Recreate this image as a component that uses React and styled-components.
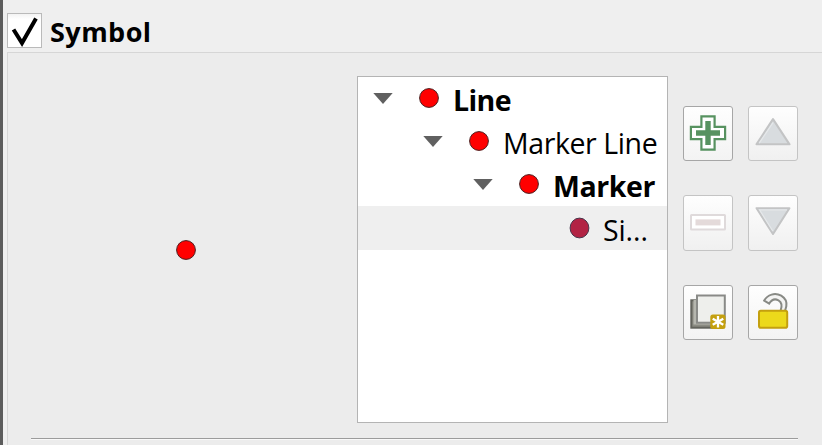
import React from 'react';
import styled, { createGlobalStyle } from 'styled-components';

const GlobalStyle = createGlobalStyle`
  * { box-sizing: border-box; }
  body { margin: 0; background: #efefef; overflow: hidden; }
  svg { display: block; }
`;

const Window = styled.div`
  height: 445px;
  border-left: 3px solid #5c5c5c;
  padding: 13px 0 0 4px;
  background: #efefef;
  color: #000;
  font-family: "Open Sans", "Noto Sans", sans-serif;
  overflow: hidden;
`;

const Header = styled.label`
  display: flex;
  height: 39px;
`;

const CheckBox = styled.span`
  width: 35px;
  height: 35px;
  border: 1px solid #bababa;
  background: linear-gradient(#f3f3f3, #fff 5px);
`;

const Title = styled.span`
  margin-left: 8px;
  font-size: 27px;
  line-height: 38px;
  font-weight: 700;
  letter-spacing: ${(p) => p.$spacing}px;
`;

const GroupFrame = styled.section`
  height: 394px;
  padding: 23px 24px 0 23px;
  border: solid #d6d6d6;
  border-width: 1px 0 0 1px;
  background: #ececec;
`;

const Editor = styled.div`
  display: grid;
  grid-template-columns: 326px 311px 1fr;
  height: 347px;
`;

const Preview = styled.div`
  display: flex;
  align-items: center;
  padding: 1px 0 0 144px;
`;

const Tree = styled.div`
  border: 1px solid #b4b4b4;
  background: #fff;
`;

const TreeRow = styled.div`
  display: flex;
  height: ${(p) => (p.$selected ? 44 : 43)}px;
  padding-top: ${(p) => (p.$selected ? 1 : 0)}px;
  padding-left: ${(p) => 15 + p.$depth * 50}px;
  background: ${(p) => (p.$selected ? '#efefef' : '#fff')};
`;

const Expander = styled.span`
  width: 20px;
  margin-top: 16px;
`;

const Swatch = styled.span`
  width: 22px;
  margin: 10px 0 0 25px;
`;

const ItemName = styled.span`
  margin-left: 13px;
  font-size: 28.5px;
  line-height: 47px;
  height: 43px;
  white-space: nowrap;
  font-weight: ${(p) => (p.$bold ? 700 : 400)};
  letter-spacing: ${(p) => p.$spacing}px;
`;

const Tools = styled.div`
  display: grid;
  grid-template-columns: 50px 50px;
  grid-template-rows: 55px 56px 55px;
  gap: 34px 15px;
  align-content: start;
  padding: 30px 0 0 15px;
`;

const ToolButton = styled.button`
  display: flex;
  align-items: flex-start;
  width: 50px;
  height: 100%;
  padding: 0;
  border: 1px solid ${(p) => (p.disabled ? '#c4c4c4' : '#a6a6a6')};
  border-radius: 3px;
  background: linear-gradient(#fefefe, ${(p) => (p.disabled ? '#f0f0f0' : '#f3f3f3')});
`;

const Divider = styled.div`
  height: 2px;
  margin-top: 15px;
  border-top: 1px solid #9c9c9c;
  background: #f9f9f9;
`;

const Dot = ({ fill = '#ff0000', stroke = '#4a2020', rx = 9.4, ry = 9.4, cx = 11 }) => (
  <svg width="22" height="22" viewBox="0 0 22 22">
    <ellipse cx={cx} cy="11" rx={rx} ry={ry} fill={fill} stroke={stroke} />
  </svg>
);

const Arrow = () => (
  <svg width="20" height="12" viewBox="0 0 20 12">
    <path d="M.3 0H19.7L10 11Z" fill="#606060" />
  </svg>
);

const Check = () => (
  <svg width="33" height="33" viewBox="0 0 33 33">
    <path d="M5.5 15.5 14 29 28 4.5" fill="none" stroke="#000" strokeWidth="4" />
  </svg>
);

const Icon = ({ children }) => (
  <svg width="48" height="53" viewBox="0 0 48 53">{children}</svg>
);

const AddIcon = () => (
  <Icon>
    <path d="M17.4 9.4H30.6V19.9H41.1V32.1H30.6V42.6H17.4V32.1H6.9V19.9H17.4Z" fill="#fff" stroke="#579260" strokeWidth="2.2" />
    <path d="M21.3 14H26.7V23.3H36V28.7H26.7V38H21.3V28.7H12V23.3H21.3Z" fill="#579260" />
  </Icon>
);

const RemoveIcon = () => (
  <Icon>
    <rect x="7" y="19" width="34" height="14.6" rx=".5" fill="#fff" stroke="#dfdadb" strokeWidth="2" />
    <rect x="11.5" y="23.4" width="25" height="6" fill="#e4dada" />
  </Icon>
);

const UpIcon = () => (
  <Icon>
    <path d="M24 12.2 40.5 37.3H7.5Z" fill="#d8dcdf" stroke="#c3c4c5" strokeWidth="2.1" strokeLinejoin="round" />
    <path d="M24 15.6 10.2 36.2" fill="none" stroke="#e5e8ea" strokeWidth="1.2" />
  </Icon>
);

const DownIcon = () => (
  <Icon>
    <path d="M7.6 12.2H40.4L24 38Z" fill="#d8dcdf" stroke="#c3c4c5" strokeWidth="2.1" strokeLinejoin="round" />
    <path d="M23.8 35 10.5 13.8H38" fill="none" stroke="#e5e8ea" strokeWidth="1.2" />
  </Icon>
);

const DuplicateIcon = () => (
  <Icon>
    <rect x="7.3" y="14.3" width="27.4" height="27.4" fill="#8a8b82" stroke="#62635c" strokeWidth="2" />
    <path d="M11 14V37H33" fill="none" stroke="#b5b6ae" strokeWidth="3" />
    <rect x="13" y="9.5" width="27.8" height="27.2" fill="#eeefec" stroke="#898a87" strokeWidth="2" />
    <rect x="26.3" y="28.5" width="15.2" height="14.5" rx="2.5" fill="#c4a00f" />
    <path d="M34 30V41.6M28.7 32.8 39.3 38.8M39.3 32.8 28.7 38.8" stroke="#fff" strokeWidth="2.3" />
  </Icon>
);

const UnlockIcon = () => (
  <Icon>
    <path d="M15.2 14.6C18.5 8.5 26 6.3 32.2 9.7 36.5 12.3 38 16.1 37.3 20.3L36 25H31.5C33.3 20.1 33.2 16.4 29.5 14.3 26 12.5 22.5 13.7 20.2 17.6Z" fill="#f4f4f3" stroke="#888a85" strokeWidth="2" />
    <rect x="10" y="24.7" width="28.2" height="17" rx="1.8" fill="#ecd91b" stroke="#c4a00f" strokeWidth="2" />
  </Icon>
);

const rows = [
  { name: 'Line', bold: true, spacing: -0.6 },
  { name: 'Marker Line', spacing: -0.4 },
  { name: 'Marker', bold: true, spacing: -0.4 },
];

const tools = [
  ['Add', AddIcon], ['Move up', UpIcon, true],
  ['Remove', RemoveIcon, true], ['Move down', DownIcon, true],
  ['Duplicate', DuplicateIcon], ['Unlock', UnlockIcon],
];

export default function App() {
  return (
    <>
      <GlobalStyle />
      <Window>
        <Header>
          <CheckBox><Check /></CheckBox>
          <Title $spacing={0.45}>Symbol</Title>
        </Header>
        <GroupFrame>
          <Editor>
            <Preview><Dot /></Preview>
            <Tree>
              {rows.map((row, depth) => (
                <TreeRow key={row.name} $depth={depth}>
                  <Expander><Arrow /></Expander>
                  <Swatch><Dot /></Swatch>
                  <ItemName $bold={row.bold} $spacing={row.spacing}>{row.name}</ItemName>
                </TreeRow>
              ))}
              <TreeRow $depth={3} $selected>
                <Expander />
                <Swatch><Dot fill="#b22344" stroke="#49364c" cx={11.5} ry={9.9} /></Swatch>
                <ItemName $spacing={-0.1}>Si...</ItemName>
              </TreeRow>
            </Tree>
            <Tools>
              {tools.map(([label, Glyph, disabled]) => (
                <ToolButton key={label} aria-label={label} disabled={disabled}><Glyph /></ToolButton>
              ))}
            </Tools>
          </Editor>
          <Divider />
        </GroupFrame>
      </Window>
    </>
  );
}
